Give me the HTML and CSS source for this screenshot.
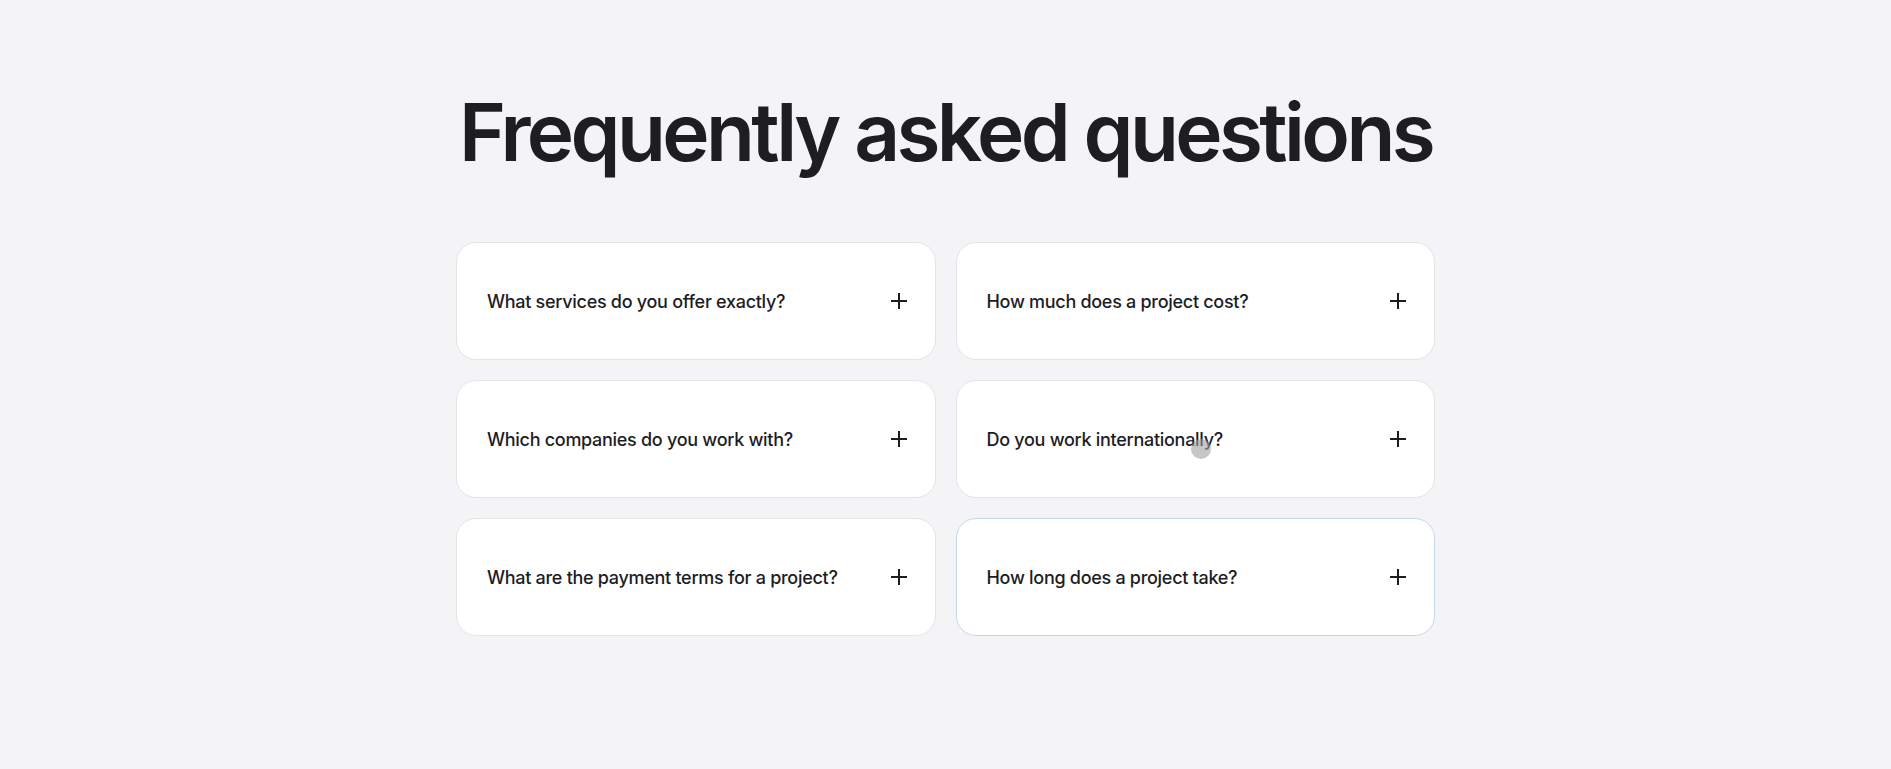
FILE: index.html
```html
<!DOCTYPE html>
<html lang="en">
<head>
<meta charset="utf-8">
<title>FAQ</title>
<link rel="stylesheet" href="styles.css">
</head>
<body>
<section class="faq">
  <h1 class="faq-title">Frequently asked questions</h1>
  <div class="faq-grid">
    <div class="faq-item"><span class="faq-q">What services do you offer exactly?</span><svg class="plus" viewBox="0 0 18 18"><path d="M9 1v16M1 9h16"/></svg></div>
    <div class="faq-item"><span class="faq-q">How much does a project cost?</span><svg class="plus" viewBox="0 0 18 18"><path d="M9 1v16M1 9h16"/></svg></div>
    <div class="faq-item"><span class="faq-q">Which companies do you work with?</span><svg class="plus" viewBox="0 0 18 18"><path d="M9 1v16M1 9h16"/></svg></div>
    <div class="faq-item"><span class="faq-q">Do you work internationally?</span><svg class="plus" viewBox="0 0 18 18"><path d="M9 1v16M1 9h16"/></svg></div>
    <div class="faq-item"><span class="faq-q">What are the payment terms for a project?</span><svg class="plus" viewBox="0 0 18 18"><path d="M9 1v16M1 9h16"/></svg></div>
    <div class="faq-item is-hover"><span class="faq-q">How long does a project take?</span><svg class="plus" viewBox="0 0 18 18"><path d="M9 1v16M1 9h16"/></svg></div>
  </div>
</section>
<div class="cursor-dot"></div>
</body>
</html>
```
FILE: styles.css
```css
html, body {
  margin: 0;
  padding: 0;
  background: #f4f4f6;
  font-family: Inter, "Noto Sans", sans-serif;
  color: #1d1d1f;
}
.faq {
  width: 979px;
  margin: 0 auto;
  padding-top: 92px;
}
.faq-title {
  margin: 0 -40px 70px;
  font-size: 80px;
  line-height: 80px;
  font-weight: 600;
  letter-spacing: -0.045em;
  white-space: nowrap;
  text-align: center;
  color: #1e1e20;
}
.faq-grid {
  display: grid;
  grid-template-columns: 1fr 1fr;
  column-gap: 20px;
  row-gap: 20px;
}
.faq-item {
  height: 118px;
  box-sizing: border-box;
  display: flex;
  align-items: center;
  justify-content: space-between;
  padding: 0 27px 0 30px;
  background: #ffffff;
  border: 1px solid #e4e4e7;
  border-radius: 20px;
}
.faq-item.is-hover {
  border-color: #c4d8ed;
}
.faq-q {
  font-size: 18px;
  font-weight: 500;
  letter-spacing: -0.016em;
  color: #1d1d1f;
}
.plus {
  width: 18px;
  height: 18px;
  flex: none;
  stroke: #1d1d1f;
  stroke-width: 2;
  fill: none;
}
.cursor-dot {
  position: absolute;
  left: 1191px;
  top: 439px;
  width: 20px;
  height: 20px;
  border-radius: 50%;
  background: rgba(160, 160, 160, 0.6);
}
```
